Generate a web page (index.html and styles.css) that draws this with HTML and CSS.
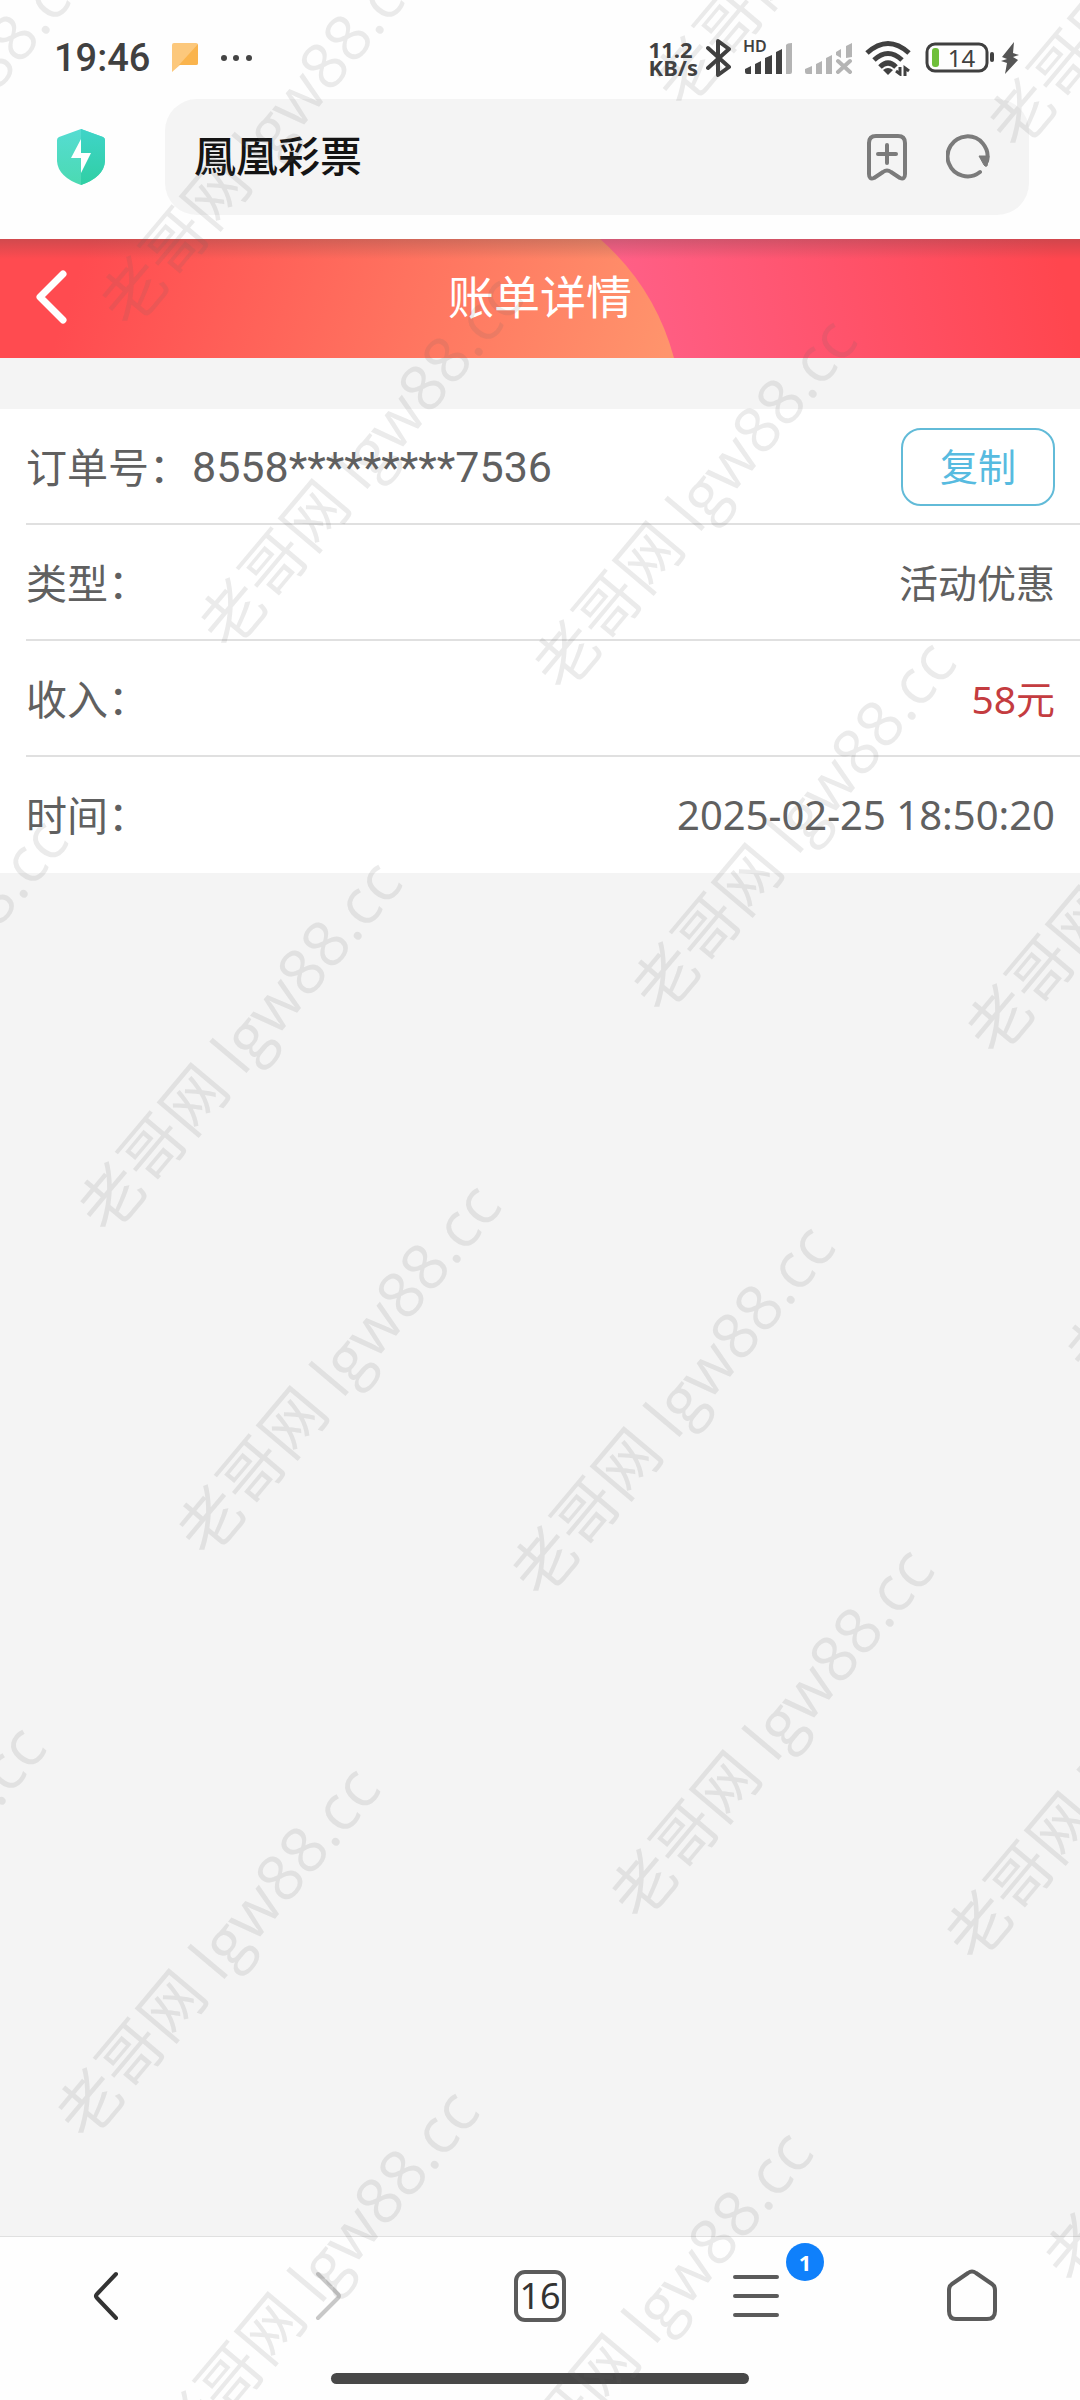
FILE: index.html
```html
<!DOCTYPE html>
<html lang="zh-CN">
<head>
<meta charset="utf-8">
<meta name="viewport" content="width=device-width, initial-scale=1">
<title>账单详情</title>
<link rel="stylesheet" href="styles.css">
</head>
<body>
<div class="status">
  <div class="status-left">
    <time class="clock">19:46</time>
    <svg width="26" height="29" viewBox="0 0 26 29"><path d="M2 0H24Q26 0 26 2V20Q26 22 24 22H8L0 29V2Q0 0 2 0Z" fill="#fcc87c"/><path d="M26 1V20Q26 22 24 22H7Z" fill="#fab44d"/></svg>
    <svg width="32" height="8" viewBox="0 0 32 8" fill="#444"><circle cx="4" cy="4" r="3"/><circle cx="16" cy="4" r="3"/><circle cx="29" cy="4" r="3"/></svg>
  </div>
  <div class="status-right">
    <div class="speed"><span>11.2</span><span>KB/s</span></div>
    <svg class="bluetooth" width="26" height="40" viewBox="0 0 26 40" fill="none" stroke="#404040" stroke-width="4" stroke-linejoin="round" stroke-linecap="round"><path d="M2 10L23 29L12 37V3L23 11L2 30"/></svg>
    <div class="mobile">
      <span class="hd">HD</span>
      <svg width="50" height="32" viewBox="0 0 50 32" fill="#404040"><path d="M1 27L7 24V32H3Q1 32 1 30ZM11 22L17 19V32H11ZM21 16L28 13V32H21ZM32 10L38 7V32H32Z"/><path d="M42 3Q43 1 48 1V30Q48 32 46 32H42Z" fill="#b4b4b4"/></svg>
    </div>
    <svg class="no-signal" width="50" height="32" viewBox="0 0 50 32" fill="#b4b4b4"><path d="M1 27L8 24V32H3Q1 32 1 30ZM12 22L18 19V32H12ZM22 16L28 13V32H22ZM32 10L37 7V16L32 13ZM42 4L48 1V15L42 16Z"/><path d="M34 19L46 30M46 19L34 30" stroke="#b4b4b4" stroke-width="4" stroke-linecap="round"/></svg>
    <svg class="wifi" width="46" height="36" viewBox="0 0 46 36" fill="none" stroke="#404040" stroke-width="5"><path d="M2 13Q23 -6 44 13"/><path d="M9 20Q23 7 37 20"/><path d="M15 27Q23 19 31 27"/><path d="M23 35L18 30Q23 26 28 30Z" fill="#404040" stroke="none"/><path d="M35 27V34L31 31M40 36V28L44 31" stroke-width="3"/></svg>
    <div class="battery">
      <svg width="70" height="31" viewBox="0 0 70 31"><rect x="2" y="2" width="60" height="27" rx="8" fill="none" stroke="#404040" stroke-width="3"/><rect x="7" y="6" width="7" height="19" rx="3" fill="#6fbf3a"/><rect x="65" y="10" width="4" height="10" rx="2" fill="#404040"/></svg>
      <span class="battery-level">14</span>
    </div>
    <svg width="18" height="32" viewBox="0 0 18 32"><path d="M13 0L1 15L6 17L0 19L6 21L4 32L17 18L12 15L18 13L12 11Z" fill="#555"/></svg>
  </div>
</div>

<header class="browser">
  <button class="plain shield" aria-label="安全">
    <svg width="48" height="56" viewBox="0 0 48 56"><defs><linearGradient id="sa" x1="0" y1="0" x2="0" y2="1"><stop offset="0" stop-color="#55dcd2"/><stop offset="1" stop-color="#4bdab2"/></linearGradient><linearGradient id="sb" x1="0" y1="0" x2="0" y2="1"><stop offset="0" stop-color="#3fd4c8"/><stop offset="1" stop-color="#30cfa4"/></linearGradient></defs><path d="M24 0L46 8Q48 9 48 11V32Q47 48 24 56Q1 48 0 32V11Q0 9 2 8Z" fill="url(#sa)"/><path d="M24 0L46 8Q48 9 48 11V32Q47 48 24 56Z" fill="url(#sb)"/><path d="M24 10L14 29H24V44L34 24H24Z" fill="#fff"/></svg>
  </button>
  <div class="address">
    <input class="address-input" type="text" value="鳳凰彩票" aria-label="网址">
    <button class="plain" aria-label="添加书签">
      <svg width="42" height="48" viewBox="0 0 42 48" fill="none" stroke="#7b7b7b" stroke-width="4" stroke-linecap="round" stroke-linejoin="round"><path d="M10 3H32Q39 3 39 10V41Q39 47 34 45L25 39Q21 36 17 39L8 45Q3 47 3 41V10Q3 3 10 3ZM12 21H30M21 12V30"/></svg>
    </button>
    <button class="plain" aria-label="刷新">
      <svg width="44" height="46" viewBox="0 0 44 46"><path d="M34 38A20 20 0 1 1 41 27" fill="none" stroke="#7b7b7b" stroke-width="4" stroke-linecap="round"/><path d="M33 22L43 22L41 32Q39 33 38 31Z" fill="#7b7b7b" stroke="#7b7b7b" stroke-linejoin="round"/></svg>
    </button>
  </div>
</header>

<div class="title-bar">
  <svg class="title-art" viewBox="0 0 1080 119" preserveAspectRatio="xMidYMid slice" aria-hidden="true"><defs><linearGradient id="ta" gradientUnits="userSpaceOnUse" x1="90" y1="0" x2="640" y2="190"><stop offset="0" stop-color="#ff4b50"/><stop offset="1" stop-color="#ff946c"/></linearGradient><linearGradient id="tb" gradientUnits="userSpaceOnUse" x1="640" y1="119" x2="1060" y2="30"><stop offset="0" stop-color="#ff5f86"/><stop offset="1" stop-color="#ff464e"/></linearGradient></defs><rect width="1080" height="119" fill="url(#tb)"/><path d="M0 0H600A242 242 0 0 1 674 119H0Z" fill="url(#ta)"/></svg>
  <button class="plain back" aria-label="返回"><svg width="32" height="56" viewBox="0 0 32 56" fill="none" stroke="#fff" stroke-width="7" stroke-linecap="round" stroke-linejoin="round"><path d="M27 5L4 28L27 51"/></svg></button>
  <h1 class="title">账单详情</h1>
</div>

<main class="content">
  <dl class="bill">
    <div class="row"><dt>订单号：</dt><dd class="order">8558*********7536</dd><dd class="action"><button class="copy">复制</button></dd></div>
    <div class="row"><dt>类型：</dt><dd class="value">活动优惠</dd></div>
    <div class="row"><dt>收入：</dt><dd class="value income">58元</dd></div>
    <div class="row"><dt>时间：</dt><dd class="value date">2025-02-25 18:50:20</dd></div>
  </dl>
</main>

<nav class="toolbar">
  <button class="plain" aria-label="后退"><svg width="54" height="56" viewBox="0 0 54 56" fill="none" stroke="#333" stroke-width="4" stroke-linecap="round" stroke-linejoin="round"><path d="M35 6L16 26Q14 28 16 30L35 50"/></svg></button>
  <button class="plain" aria-label="前进" disabled><svg width="54" height="56" viewBox="0 0 54 56" fill="none" stroke="#c8c8c8" stroke-width="4" stroke-linecap="round" stroke-linejoin="round"><path d="M21 6L41 26Q43 28 41 30L21 50"/></svg></button>
  <button class="plain"><span class="tabs">16</span></button>
  <button class="plain" aria-label="菜单"><span class="menu"><svg width="46" height="56" viewBox="0 0 46 56" stroke="#5b5b5b" stroke-width="4" stroke-linecap="round"><path d="M2 9H44M2 28H44M2 47H44"/></svg><span class="badge">1</span></span></button>
  <button class="plain" aria-label="主页"><svg width="54" height="56" viewBox="0 0 54 56" fill="none" stroke="#5b5b5b" stroke-width="4" stroke-linejoin="round"><path d="M23 5Q27 2 31 5L47 16Q50 18 50 22V43Q50 51 42 51H11Q4 51 4 43V22Q4 18 7 16Z"/></svg></button>
</nav>
<div class="gesture"><span class="gesture-bar"></span></div>

<svg class="watermark" aria-hidden="true">
  <text transform="translate(-203 331) rotate(-50)">老哥网 lgw88.cc</text>
  <text transform="translate(131 331) rotate(-50)">老哥网 lgw88.cc</text>
  <text transform="translate(685 111) rotate(-50)">老哥网 lgw88.cc</text>
  <text transform="translate(1019 153) rotate(-50)">老哥网 lgw88.cc</text>
  <text transform="translate(230 653) rotate(-50)">老哥网 lgw88.cc</text>
  <text transform="translate(564 695) rotate(-50)">老哥网 lgw88.cc</text>
  <text transform="translate(663 1017) rotate(-50)">老哥网 lgw88.cc</text>
  <text transform="translate(997 1059) rotate(-50)">老哥网 lgw88.cc</text>
  <text transform="translate(-225 1195) rotate(-50)">老哥网 lgw88.cc</text>
  <text transform="translate(109 1237) rotate(-50)">老哥网 lgw88.cc</text>
  <text transform="translate(208 1560) rotate(-50)">老哥网 lgw88.cc</text>
  <text transform="translate(542 1601) rotate(-50)">老哥网 lgw88.cc</text>
  <text transform="translate(1097 1382) rotate(-50)">老哥网 lgw88.cc</text>
  <text transform="translate(641 1924) rotate(-50)">老哥网 lgw88.cc</text>
  <text transform="translate(976 1965) rotate(-50)">老哥网 lgw88.cc</text>
  <text transform="translate(-247 2102) rotate(-50)">老哥网 lgw88.cc</text>
  <text transform="translate(87 2143) rotate(-50)">老哥网 lgw88.cc</text>
  <text transform="translate(186 2466) rotate(-50)">老哥网 lgw88.cc</text>
  <text transform="translate(520 2507) rotate(-50)">老哥网 lgw88.cc</text>
  <text transform="translate(1075 2288) rotate(-50)">老哥网 lgw88.cc</text>
</svg>
</body>
</html>
```
FILE: styles.css
```css
* { box-sizing: border-box; }
body {
  margin: 0;
  min-height: 100vh;
  display: flex;
  flex-direction: column;
  position: relative;
  overflow-x: hidden;
  background: #fefefe;
  color: #606060;
  font-family: "Noto Sans", "Noto Sans CJK SC", sans-serif;
}
svg { display: block; flex: none; }
.plain {
  border: 0;
  padding: 0;
  background: none;
  color: inherit;
  font: inherit;
}

.status {
  display: flex;
  justify-content: space-between;
  align-items: center;
  padding: 16px 61px 0 54px;
  height: 99px;
  color: #404040;
}
.status-left, .status-right { display: flex; align-items: center; }
.status-left { gap: 22px; }
.clock { font: 500 38px/40px Roboto, sans-serif; }
.speed {
  display: flex;
  flex-direction: column;
  margin-right: 8px;
  font: 700 22px/18px "Noto Sans", sans-serif;
}
.bluetooth { margin-right: 12px; }
.mobile { position: relative; margin-right: 10px; }
.hd {
  position: absolute;
  top: -5px;
  left: -1px;
  font: 600 16px/18px "Noto Sans", sans-serif;
}
.no-signal { margin-right: 11px; }
.wifi { margin-right: 14px; }
.battery { position: relative; margin-right: 6px; }
.battery-level {
  position: absolute;
  inset: 0 8px 0 11px;
  text-align: center;
  font: 400 24px/31px "Noto Sans", sans-serif;
}

.browser { display: flex; align-items: center; padding: 0 51px 24px 57px; }
.shield { margin-right: 60px; }
.address {
  flex: 1;
  min-width: 0;
  display: flex;
  align-items: center;
  gap: 38px;
  height: 116px;
  padding: 0 39px 0 29px;
  border-radius: 32px;
  background: #f4f4f4;
}
.address-input {
  flex: 1;
  min-width: 0;
  border: 0;
  padding: 0 0 6px;
  background: none;
  color: #141414;
  font: 500 42px/60px "Noto Sans CJK SC", sans-serif;
}

.title-bar {
  position: relative;
  display: grid;
  grid-template-columns: 1fr auto 1fr;
  align-items: center;
  height: 119px;
  padding: 0 36px 3px;
  color: #fff;
}
.title-bar::before {
  content: "";
  position: absolute;
  inset: 0 0 auto;
  height: 20px;
  z-index: 1;
  background: linear-gradient(rgba(70, 70, 70, .25), rgba(70, 70, 70, 0));
}
.title-art { position: absolute; inset: 0; width: 100%; height: 100%; }
.back, .title { position: relative; }
.back { justify-self: start; }
.title { margin: 0; padding-bottom: 6px; font: 400 46px/60px "Noto Sans CJK SC", sans-serif; }

.content { flex: 1; padding-top: 51px; background: #f4f4f4; }
.bill { margin: 0; padding-left: 26px; background: #fff; }
.row {
  display: flex;
  align-items: center;
  height: 116px;
  padding-right: 25px;
  border-bottom: 2px solid #e0e0e0;
}
.row:last-child { border-bottom-color: transparent; }
dt { padding-bottom: 2px; font-size: 41px; }
dd { margin: 0; }
.order { margin-left: 2px; padding-top: 2px; font: 400 43px/60px Roboto, sans-serif; }
.action, .value { margin-left: auto; }
.action { padding-top: 2px; }
.value { padding-bottom: 2px; font-size: 39px; }
.value.date { padding-bottom: 0; font-size: 40px; }
.income { color: #c43c40; }
.copy {
  display: block;
  width: 154px;
  height: 78px;
  padding: 0 0 4px;
  border: 2px solid #62bbd8;
  border-radius: 20px;
  background: none;
  color: #57bbe0;
  font: 400 38px/60px "Noto Sans CJK SC", sans-serif;
}

.toolbar {
  display: grid;
  grid-template-columns: repeat(5, 1fr);
  height: 119px;
  border-top: 1px solid #e0e0e0;
}
.toolbar .plain { display: flex; align-items: center; justify-content: center; }
.tabs {
  width: 52px;
  height: 52px;
  border: 4px solid #5b5b5b;
  border-radius: 11px;
  color: #333;
  font-size: 36px;
  line-height: 44px;
}
.menu { position: relative; }
.badge {
  position: absolute;
  top: -25px;
  left: 53px;
  width: 38px;
  height: 38px;
  border-radius: 50%;
  background: #0f80fb;
  color: #fff;
  text-align: center;
  font-size: 22px;
  font-weight: 700;
  line-height: 38px;
}
.gesture { display: flex; justify-content: center; height: 45px; padding-top: 18px; }
.gesture-bar { width: 418px; height: 11px; border-radius: 6px; background: #484848; }

.watermark {
  position: absolute;
  inset: 0;
  z-index: 2;
  width: 100%;
  height: 100%;
  overflow: hidden;
  pointer-events: none;
  fill: rgba(100, 100, 100, .13);
  font: 400 64px "Open Sans", "Noto Sans CJK SC", sans-serif;
}
```
